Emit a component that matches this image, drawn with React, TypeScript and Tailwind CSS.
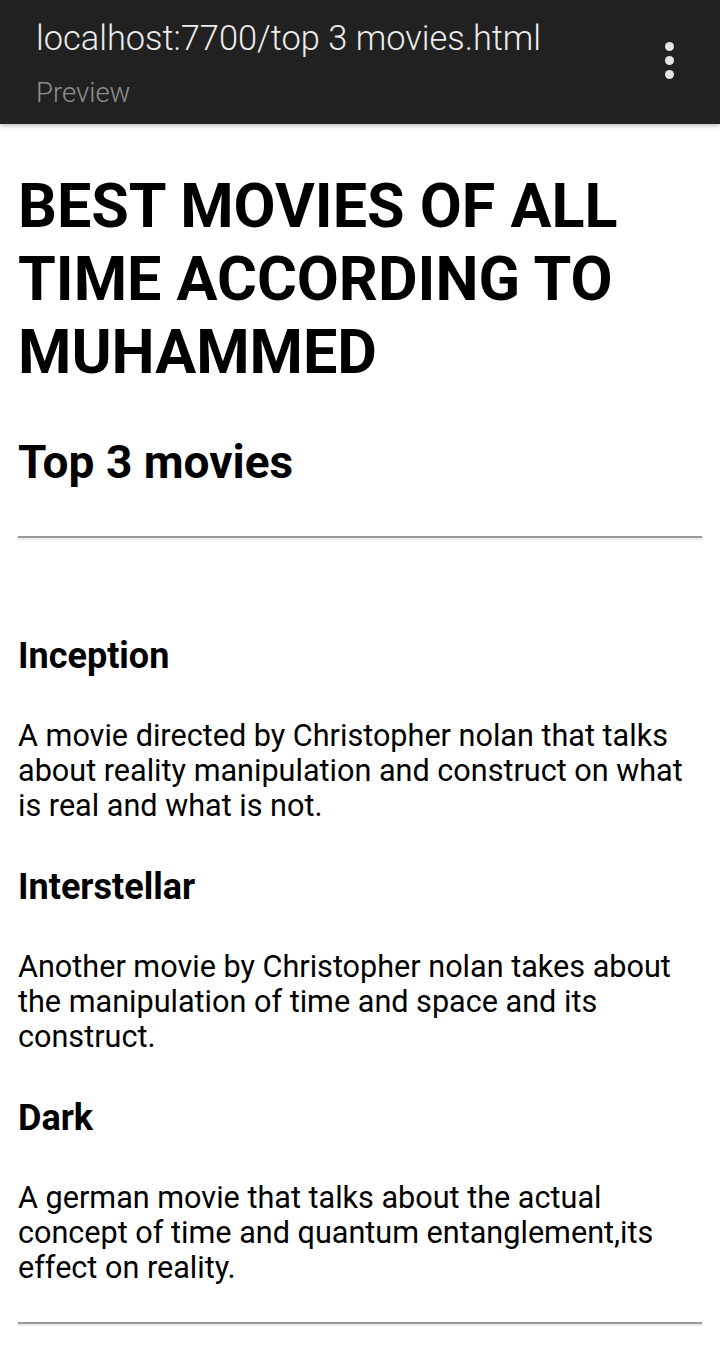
export default function App() {
  const movies = [
    {
      title: 'Inception',
      text: 'A movie directed by Christopher nolan that talks about reality manipulation and construct on what is real and what is not.',
    },
    {
      title: 'Interstellar',
      text: 'Another movie by Christopher nolan takes about the manipulation of time and space and its construct.',
    },
    {
      title: 'Dark',
      text: 'A german movie that talks about the actual concept of time and quantum entanglement,its effect on reality.',
    },
  ]

  return (
    <div className="min-h-[1346px] bg-white font-['Roboto',sans-serif] text-black">
      <header className="flex h-[124px] items-start justify-between bg-[#212121] pl-[36px] pr-[46px] shadow-[0_2px_4px_rgba(0,0,0,0.25)]">
        <div className="flex flex-col pt-[16px]">
          <div className="text-[34.4px] font-light leading-[44px] text-[#ececec]">localhost:7700/top 3 movies.html</div>
          <div className="mt-[17px] text-[27.5px] font-light leading-[32px] text-[#8f8f8f]">Preview</div>
        </div>
        <div className="flex flex-col items-center gap-[5px] pt-[42px]">
          <span className="h-[9px] w-[9px] rounded-full bg-[#e4e4e4]" />
          <span className="h-[9px] w-[9px] rounded-full bg-[#e4e4e4]" />
          <span className="h-[9px] w-[9px] rounded-full bg-[#e4e4e4]" />
        </div>
      </header>

      <main className="px-[18px]">
        <h1 className="mt-[46px] text-[61px] font-bold leading-[73px]">
          BEST MOVIES OF ALL TIME ACCORDING TO MUHAMMED
        </h1>
        <h2 className="mt-[47px] text-[46px] font-bold leading-[52px]">Top 3 movies</h2>
        <hr className="mt-[48px] border-t-2 border-b-2 border-t-[#999999] border-b-[#ededed]" />

        <div className="mt-[95px] flex flex-col gap-[43px]">
          {movies.map((m) => (
            <section key={m.title}>
              <h3 className="text-[36px] font-bold leading-[42px]">{m.title}</h3>
              <p className="mt-[41px] text-[30.6px] leading-[35px]">{m.text}</p>
            </section>
          ))}
        </div>

        <hr className="mt-[37px] border-t-2 border-b-2 border-t-[#999999] border-b-[#ededed]" />
      </main>
    </div>
  )
}
